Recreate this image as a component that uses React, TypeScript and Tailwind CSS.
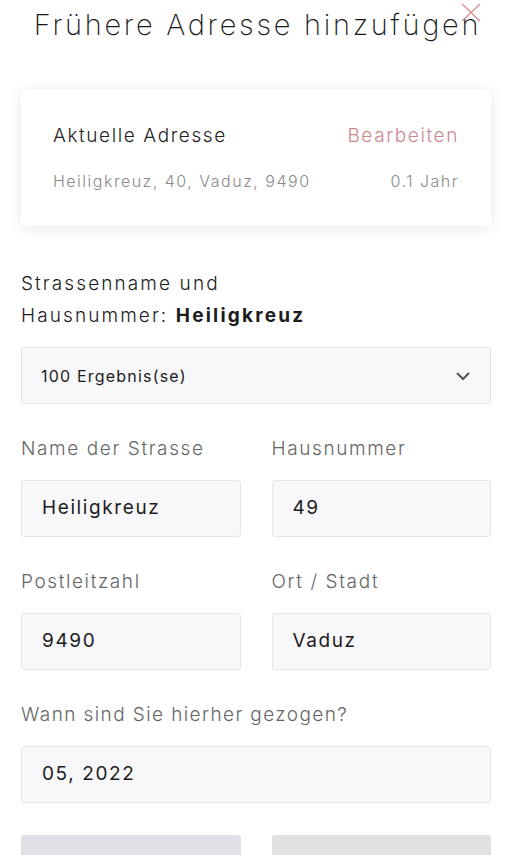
import React from "react";

const font = { fontFamily: 'Inter, "Open Sans", sans-serif' };

function Field({ value }: { value: string }) {
  return (
    <div className="h-[57px] rounded-[3px] border border-[#e6e6e8] bg-[#f8f7f9] flex items-center px-[20px] text-[19px] tracking-[1.6px] text-[#1c1c1c]">
      {value}
    </div>
  );
}

export default function App() {
  return (
    <div className="relative w-[512px] h-[855px] overflow-hidden bg-white" style={font}>
      <div className="relative h-[52px] flex items-start justify-center">
        <h1 className="mt-[3px] ml-[3px] text-[29px] font-extralight leading-[44px] tracking-[2.7px] text-[#1a1a1a] whitespace-nowrap">
          Frühere Adresse hinzufügen
        </h1>
        <svg className="absolute left-[461px] top-[3px]" width="20" height="19" viewBox="0 0 20 19">
          <path d="M1 1 L19 18 M19 1 L1 18" stroke="#d59398" strokeWidth="1.5" fill="none" />
        </svg>
      </div>

      <div className="px-[21px]">
        <div className="mt-[38px] h-[136px] bg-white shadow-[0_2px_14px_rgba(0,0,0,0.09)] px-[32px] flex flex-col">
          <div className="mt-[33px] flex justify-between items-center h-[26px]">
            <span className="text-[19px] font-light tracking-[1.6px] text-[#222]">Aktuelle Adresse</span>
            <span className="text-[19px] font-light tracking-[1.6px] text-[#c98a8f]">Bearbeiten</span>
          </div>
          <div className="mt-[21px] flex justify-between items-center h-[22px]">
            <span className="text-[16px] font-light tracking-[1.5px] text-[#8a8a8a]">Heiligkreuz, 40, Vaduz, 9490</span>
            <span className="text-[16px] font-light tracking-[1.5px] text-[#8a8a8a]">0.1 Jahr</span>
          </div>
        </div>

        <div className="mt-[42px] text-[19px] font-light tracking-[2.1px] leading-[32px] text-[#1c1c1c]">
          Strassenname und
          <br />
          Hausnummer: <span className="font-bold tracking-[2.2px]">Heiligkreuz</span>
        </div>

        <div className="mt-[15px] h-[57px] rounded-[2px] border border-[#e3e3e5] bg-[#f8f7f9] flex items-center justify-between pl-[19px] pr-[19px] text-[16px] tracking-[1.2px] text-[#1c1c1c]">
          <span>100 Ergebnis(se)</span>
          <svg width="16" height="10" viewBox="0 0 16 10">
            <path d="M2 2 L8 8 L14 2" stroke="#555" strokeWidth="2" fill="none" />
          </svg>
        </div>

        <div className="mt-[31px] grid grid-cols-2 gap-x-[31px]">
          <div>
            <div className="h-[28px] text-[19px] font-light tracking-[1.6px] text-[#666] leading-[28px]">Name der Strasse</div>
            <div className="mt-[17px]"><Field value="Heiligkreuz" /></div>
          </div>
          <div>
            <div className="h-[28px] text-[19px] font-light tracking-[1.6px] text-[#666] leading-[28px]">Hausnummer</div>
            <div className="mt-[17px]"><Field value="49" /></div>
          </div>
        </div>

        <div className="mt-[31px] grid grid-cols-2 gap-x-[31px]">
          <div>
            <div className="h-[28px] text-[19px] font-light tracking-[1.6px] text-[#666] leading-[28px]">Postleitzahl</div>
            <div className="mt-[17px]"><Field value="9490" /></div>
          </div>
          <div>
            <div className="h-[28px] text-[19px] font-light tracking-[1.6px] text-[#666] leading-[28px]">Ort / Stadt</div>
            <div className="mt-[17px]"><Field value="Vaduz" /></div>
          </div>
        </div>

        <div className="mt-[31px]">
          <div className="h-[28px] text-[19px] font-light tracking-[1.4px] text-[#666] leading-[28px]">Wann sind Sie hierher gezogen?</div>
          <div className="mt-[17px]"><Field value="05, 2022" /></div>
        </div>

        <div className="mt-[32px] grid grid-cols-2 gap-x-[31px]">
          <div className="h-[56px] rounded-[3px] bg-[#dfe1e6]" />
          <div className="h-[56px] rounded-[3px] bg-[#e2e0e2]" />
        </div>
      </div>
    </div>
  );
}
